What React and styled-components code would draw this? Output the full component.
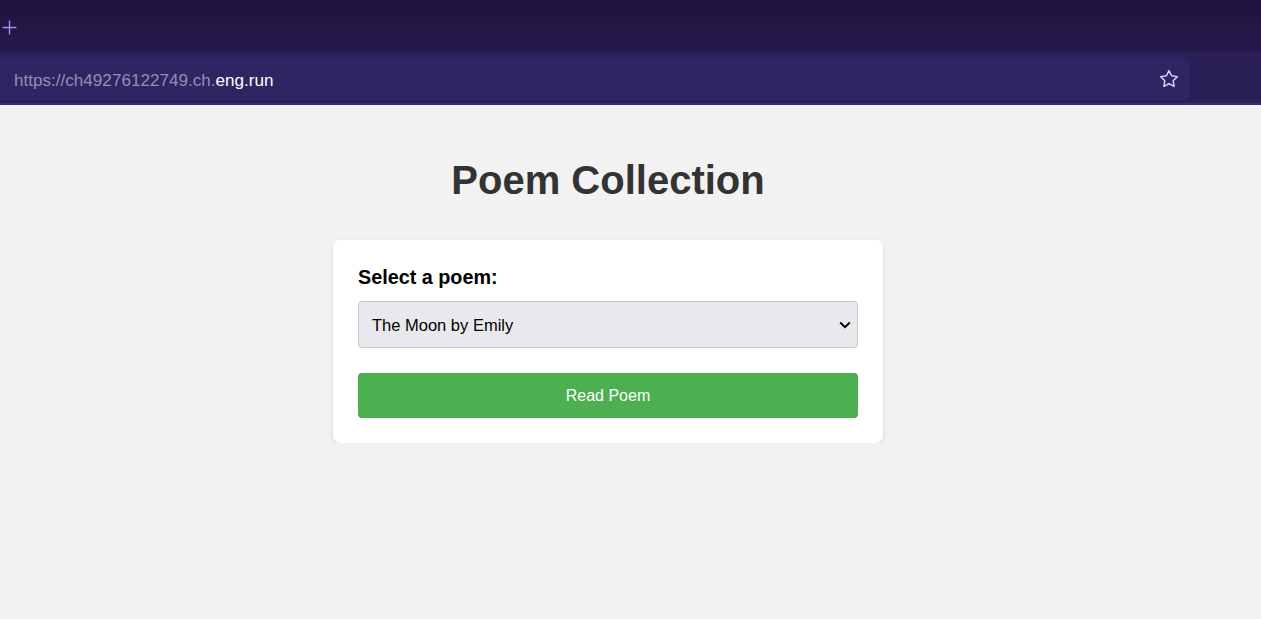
import React from "react";
import styled, { createGlobalStyle } from "styled-components";

const Global = createGlobalStyle`
  html, body { margin: 0; padding: 0; }
  body { background: #f2f2f2; font-family: "Liberation Sans", Arial, sans-serif; }
`;

const Chrome = styled.header`
  display: flex;
  flex-direction: column;
`;

const TabStrip = styled.div`
  height: 52px;
  display: flex;
  align-items: center;
  padding-left: 1px;
  padding-top: 2px;
  box-sizing: border-box;
  background: linear-gradient(#1f1440, #261a4b);
`;

const IconButton = styled.span`
  display: flex;
  align-items: center;
  justify-content: center;
  color: ${(p) => p.$color};
`;

const UrlRow = styled.div`
  height: 51px;
  background: #2a1f56;
  border-bottom: 2px solid #392c7c;
  display: flex;
  align-items: center;
  padding: 0 72px 0 0;
`;

const UrlField = styled.div`
  flex: 1;
  height: 43px;
  box-sizing: border-box;
  margin-top: 2px;
  padding: 0 9px 0 14px;
  background: #2f2562;
  border-radius: 0 6px 6px 0;
  display: flex;
  align-items: center;
  justify-content: space-between;
  font-size: 17.1px;
`;

const UrlText = styled.span`
  color: #958db4;
  padding-top: 5px;
`;

const Host = styled.span`
  color: #ffffff;
`;

const Main = styled.main`
  margin-right: 45px;
  padding-top: 52px;
  display: flex;
  flex-direction: column;
  align-items: center;
`;

const Title = styled.h1`
  margin: 0 0 37px;
  font-size: 40px;
  line-height: 46px;
  font-weight: bold;
  color: #333333;
`;

const Card = styled.section`
  width: 500px;
  padding: 25px;
  background: #ffffff;
  border-radius: 7px;
  box-shadow: 0 2px 5px rgba(0, 0, 0, 0.12);
  display: flex;
  flex-direction: column;
`;

const Label = styled.label`
  font-size: 19.8px;
  line-height: 25px;
  font-weight: bold;
  color: #000000;
  margin-bottom: 11px;
`;

const SelectWrap = styled.div`
  position: relative;
  margin-bottom: 25px;
`;

const Select = styled.select`
  appearance: none;
  width: 100%;
  height: 47px;
  box-sizing: border-box;
  padding: 0 30px 0 13px;
  background: #e9e9ed;
  border: 1px solid #c8c8cc;
  border-radius: 4px;
  font-family: "Liberation Sans", Arial, sans-serif;
  font-size: 16.5px;
  color: #000000;
`;

const Chevron = styled.svg`
  position: absolute;
  right: 7px;
  top: 20px;
  pointer-events: none;
`;

const Button = styled.button`
  height: 45px;
  border: none;
  border-radius: 4px;
  background: #4caf50;
  color: #ffffff;
  font-family: "Liberation Sans", Arial, sans-serif;
  font-size: 16px;
  padding-top: 2px;
  cursor: pointer;
`;

export default function App() {
  return (
    <>
      <Global />
      <Chrome>
        <TabStrip>
          <IconButton $color="#b486f2">
            <svg width="17" height="17" viewBox="0 0 16 16">
              <path d="M8 1.5v13M1.5 8h13" stroke="currentColor" strokeWidth="1.3" fill="none" />
            </svg>
          </IconButton>
        </TabStrip>
        <UrlRow>
          <UrlField>
            <UrlText>
              https://ch49276122749.ch.<Host>eng.run</Host>
            </UrlText>
            <IconButton $color="#d9d2f2">
              <svg width="22" height="22" viewBox="0 0 24 24" fill="none" stroke="currentColor" strokeWidth="1.6" strokeLinejoin="round">
                <path d="M12 2.8l2.8 5.7 6.3.9-4.55 4.45 1.07 6.27L12 17.16l-5.62 2.96 1.07-6.27L2.9 9.4l6.3-.9z" />
              </svg>
            </IconButton>
          </UrlField>
        </UrlRow>
      </Chrome>
      <Main>
        <Title>Poem Collection</Title>
        <Card>
          <Label htmlFor="poem">Select a poem:</Label>
          <SelectWrap>
            <Select id="poem" defaultValue="moon">
              <option value="moon">The Moon by Emily</option>
            </Select>
            <Chevron width="12" height="8" viewBox="0 0 12 8">
              <path d="M1.2 1.5L6 6.2l4.8-4.7" stroke="#000" strokeWidth="2" fill="none" />
            </Chevron>
          </SelectWrap>
          <Button type="button">Read Poem</Button>
        </Card>
      </Main>
    </>
  );
}
